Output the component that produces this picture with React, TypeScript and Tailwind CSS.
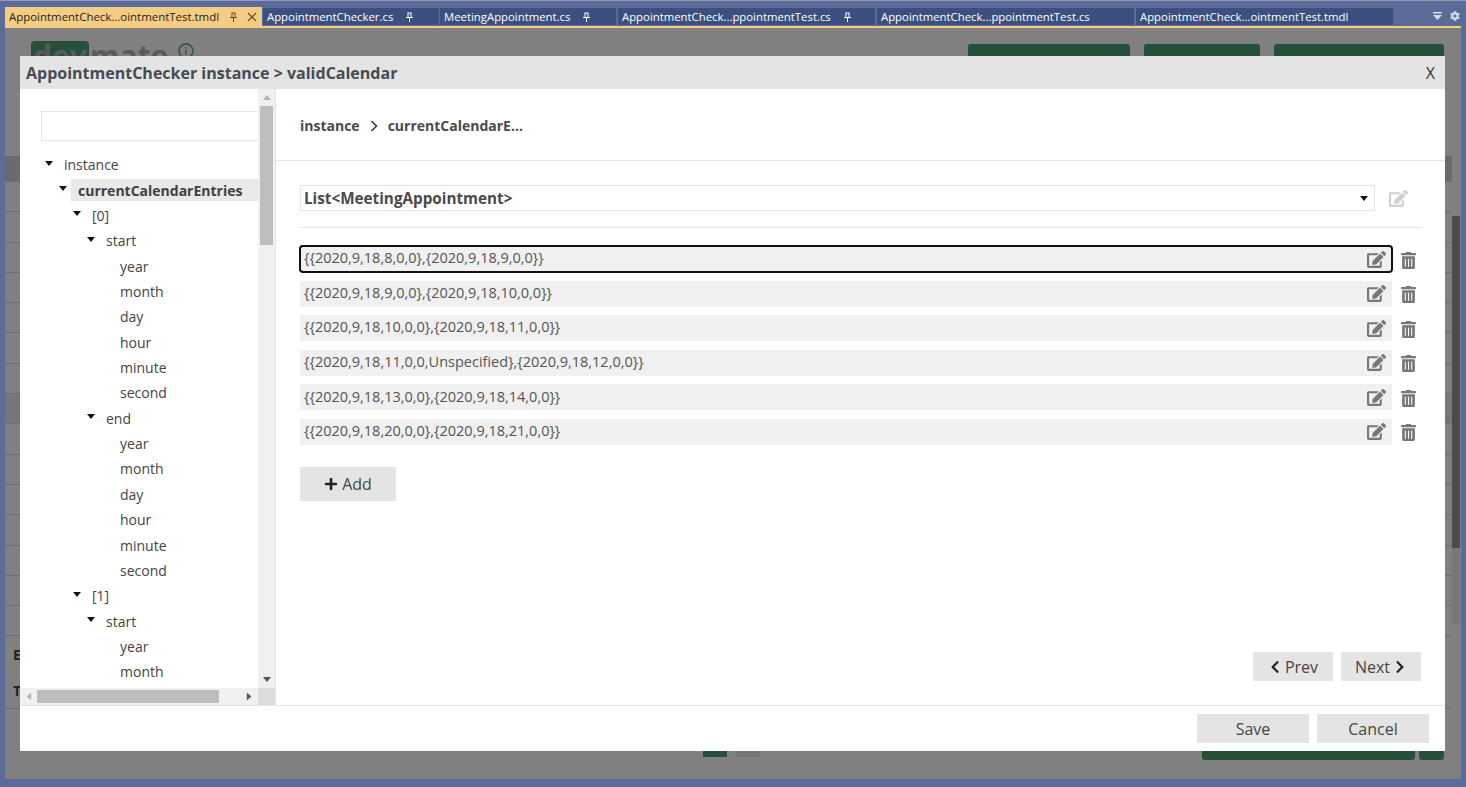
import { FaChevronLeft, FaChevronRight, FaCog, FaEdit, FaPlus, FaTrashAlt } from "react-icons/fa";

const tabs = [
  { name: "AppointmentChecker.cs", width: "w-[176px]", pin: true },
  { name: "MeetingAppointment.cs", width: "w-[176px]", pin: true },
  { name: "AppointmentCheck...ppointmentTest.cs", width: "w-[257px]", pin: true },
  { name: "AppointmentCheck...ppointmentTest.cs", width: "w-[257px]", pin: false },
  { name: "AppointmentCheck...ointmentTest.tmdl", width: "w-[257px]", pin: false },
];

const leaves = ["year", "month", "day", "hour", "minute", "second"];

const entries = [
  "{{2020,9,18,8,0,0},{2020,9,18,9,0,0}}",
  "{{2020,9,18,9,0,0},{2020,9,18,10,0,0}}",
  "{{2020,9,18,10,0,0},{2020,9,18,11,0,0}}",
  "{{2020,9,18,11,0,0,Unspecified},{2020,9,18,12,0,0}}",
  "{{2020,9,18,13,0,0},{2020,9,18,14,0,0}}",
  "{{2020,9,18,20,0,0},{2020,9,18,21,0,0}}",
];

function Pin({ className }: { className: string }) {
  return (
    <svg width="9" height="10" viewBox="0 0 9 10" className={className} fill="none" stroke="currentColor">
      <path d="M2.5 1h4M3 1v4.5M6 1v4.5M1 5.5h7M4.5 5.5V10" />
    </svg>
  );
}

function Caret({ size = 8, className = "text-black" }: { size?: number; className?: string }) {
  return (
    <svg width={size} height={size / 2 + 1} viewBox="0 0 10 6" className={`shrink-0 ${className}`} fill="currentColor">
      <path d="M0 0h10L5 6z" />
    </svg>
  );
}

function TreeRow({
  level,
  label,
  open,
  selected,
}: {
  level: number;
  label: string;
  open?: boolean;
  selected?: boolean;
}) {
  const indent = ["pl-[25px]", "pl-[39px]", "pl-[53px]", "pl-[67px]", "pl-[100px]"][level];
  return (
    <div className={`flex h-[25.36px] shrink-0 items-center ${indent}`}>
      {open && <Caret className={`mb-[3px] text-[#111] ${selected ? "mr-[4px]" : "mr-[11px]"}`} />}
      <span
        className={
          selected
            ? "flex h-[22px] w-[187px] shrink-0 items-center bg-[#e9e9e9] pl-[7px] font-bold text-[#3f3f3f]"
            : "text-[#444]"
        }
      >
        {label}
      </span>
    </div>
  );
}

function CalendarNode({ index, full }: { index: number; full: boolean }) {
  return (
    <>
      <TreeRow level={2} label={`[${index}]`} open />
      <TreeRow level={3} label="start" open />
      {(full ? leaves : leaves.slice(0, 2)).map((l) => (
        <TreeRow key={`s-${l}`} level={4} label={l} />
      ))}
      {full && (
        <>
          <TreeRow level={3} label="end" open />
          {leaves.map((l) => (
            <TreeRow key={`e-${l}`} level={4} label={l} />
          ))}
        </>
      )}
    </>
  );
}

function Backdrop() {
  return (
    <div className="flex flex-1 overflow-hidden bg-[#808080]">
      <div className="flex w-[1447px] shrink-0 flex-col">
        <div className="flex h-[128px] shrink-0 items-start overflow-hidden pl-[26px] pt-[13px]">
          <div className="flex h-[30px] items-center text-[30px] font-bold leading-none text-[#5a5a5a]">
            <span className="w-[58px] rounded-t-[4px] bg-[#26503c] px-[2px]">dev</span>
            <span className="w-[80px] pl-[1px]">mate</span>
          </div>
          <svg width="18" height="18" viewBox="0 0 18 18" className="ml-[8px] mt-[1px] text-[#26503c]" fill="none" stroke="currentColor" strokeWidth="1.3">
            <circle cx="9" cy="9" r="7" />
            <path d="M9 8v5M9 5v1.5" />
          </svg>
          <div className="ml-auto mr-[8px] mt-[3px] flex gap-[14px]">
            <div className="h-[30px] w-[162px] rounded-[3px] bg-[#26503c]" />
            <div className="h-[30px] w-[116px] rounded-[3px] bg-[#26503c]" />
            <div className="h-[30px] w-[170px] rounded-[3px] bg-[#26503c]" />
          </div>
        </div>
        <div className="h-[26px] shrink-0 bg-[#6b6b6b]" />
        {Array.from({ length: 15 }).map((_, i) => (
          <div
            key={i}
            className={`h-[30.3px] shrink-0 border-b border-[#6f6f6f] ${i === 7 ? "bg-[#777]" : ""}`}
          />
        ))}
        <div className="flex h-[36px] shrink-0 items-center pl-[8px] text-[14px] font-bold text-[#222]">E</div>
        <div className="flex h-[37px] shrink-0 items-center border-b border-[#6f6f6f] pl-[8px] text-[14px] font-bold text-[#222]">T</div>
        <div className="mt-[32px] flex h-[20px] shrink-0 items-start">
          <div className="ml-[698px] h-[16px] w-[24px] bg-[#26503c]" />
          <div className="ml-[9px] h-[16px] w-[24px] bg-[#777]" />
          <div className="ml-[442px] h-[19px] w-[213px] rounded-b-[3px] bg-[#26503c]" />
          <div className="ml-[4px] h-[19px] w-[25px] rounded-b-[3px] bg-[#26503c]" />
        </div>
      </div>
      <div className="flex w-[8px] shrink-0 flex-col">
        <div className="h-[188px] bg-[#808080]" />
        <div className="h-[332px] bg-[#4b4b4b]" />
        <div className="h-[77px] bg-[#787878]" />
      </div>
    </div>
  );
}

export default function App() {
  return (
    <div className="relative flex h-[787px] w-[1466px] flex-col overflow-hidden bg-[#5d6b99] font-['Open_Sans',sans-serif] text-[14px]">
      <div className="h-px shrink-0 bg-[#8e9bc2]" />
      <div className="mt-[6px] flex h-[19px] shrink-0 items-start gap-px pl-[5px]">
        <div className="flex h-[19px] w-[257px] items-center bg-[#f5cc84] pl-[4px] text-[11.45px] text-[#1e1e1e]">
          <span>AppointmentCheck...ointmentTest.tmdl</span>
          <Pin className="ml-[10px] text-[#5b4a2a]" />
          <svg width="10" height="10" viewBox="0 0 10 10" className="ml-[9px] text-[#6b5630]" stroke="currentColor" strokeWidth="1.3">
            <path d="M1 1l8 8M9 1l-8 8" />
          </svg>
        </div>
        {tabs.map((t, i) => (
          <div
            key={i}
            className={`mt-px flex h-[17px] ${t.width} shrink-0 items-center bg-[#3b4f81] pl-[4px] text-[11.35px] text-white ${i < 2 ? "" : "ml-px"}`}
          >
            <span>{t.name}</span>
            {t.pin && <Pin className="ml-[12px] text-white" />}
          </div>
        ))}
        <div className="ml-auto mr-[6px] mt-[4px] flex items-center gap-[8px] text-[#d5dbea]">
          <svg width="9" height="8" viewBox="0 0 9 8" fill="currentColor">
            <path d="M0 0h9v1.5H0zM0 3h9L4.5 8z" />
          </svg>
          <FaCog size={10} />
        </div>
      </div>
      <div className="mx-[5px] h-[2px] shrink-0 bg-[#f5cc84]" />
      <div className="mx-[5px] flex h-[751px] shrink-0">
        <Backdrop />
      </div>

      <div className="absolute left-[20px] top-[56px] flex h-[695px] w-[1425px] flex-col bg-white">
        <div className="flex h-[33px] shrink-0 items-center justify-between bg-[#e4e4e4] pl-[6px] pr-[10px]">
          <span className="text-[16px] font-bold text-[#454b52]">AppointmentChecker instance &gt; validCalendar</span>
          <span className="text-[16px] text-[#333]">X</span>
        </div>

        <div className="flex min-h-0 flex-1">
          <div className="flex w-[256px] shrink-0 flex-col border-r border-[#e4e4e4]">
            <div className="flex min-h-0 flex-1">
              <div className="flex min-w-0 flex-1 flex-col overflow-hidden pt-[22px]">
                <div className="ml-[21px] h-[30px] shrink-0 border border-r-0 border-[#e4e4e4]" />
                <div className="mt-[11px] flex flex-col">
                  <TreeRow level={0} label="instance" open />
                  <TreeRow level={1} label="currentCalendarEntries" open selected />
                  <CalendarNode index={0} full />
                  <CalendarNode index={1} full={false} />
                </div>
              </div>
              <div className="flex w-[17px] shrink-0 flex-col items-center bg-[#f0f0f0]">
                <div className="flex h-[17px] shrink-0 items-center justify-center">
                  <Caret size={8} className="rotate-180 text-[#b5b5b5]" />
                </div>
                <div className="h-[139px] w-[13px] shrink-0 bg-[#bdbdbd]" />
                <div className="mt-auto flex h-[17px] shrink-0 items-center justify-center">
                  <Caret size={8} className="text-[#555]" />
                </div>
              </div>
            </div>
            <div className="flex h-[17px] shrink-0 bg-[#f0f0f0]">
              <div className="flex h-full w-[17px] shrink-0 items-center justify-center">
                <Caret size={8} className="rotate-90 text-[#b5b5b5]" />
              </div>
              <div className="my-[2px] w-[182px] shrink-0 bg-[#bdbdbd]" />
              <div className="ml-[21px] flex h-full w-[17px] shrink-0 items-center justify-center">
                <Caret size={8} className="-rotate-90 text-[#555]" />
              </div>
              <div className="ml-auto h-full w-[17px] bg-[#dcdcdc]" />
            </div>
          </div>

          <div className="flex min-w-0 flex-1 flex-col">
            <div className="flex h-[72px] shrink-0 items-center border-b border-[#e4e4e4] pl-[24px] pt-[2px] font-bold text-[#4a4a4a]">
              <span>instance</span>
              <svg width="8" height="12" viewBox="0 0 8 12" className="ml-[10px] mr-[10px] text-[#333]" fill="none" stroke="currentColor" strokeWidth="1.5">
                <path d="M1.5 1l5 5-5 5" />
              </svg>
              <span>currentCalendarE...</span>
            </div>

            <div className="flex min-h-0 flex-1 flex-col pb-[24px] pl-[24px] pr-[24px]">
              <div className="mt-[24px] flex shrink-0 items-center">
                <div className="flex h-[26px] w-[1075px] shrink-0 items-center justify-between border border-[#e4e4e4] pl-[3px] pr-[6px] text-[15.25px] font-bold text-[#4a4a4a]">
                  <span>List&lt;MeetingAppointment&gt;</span>
                  <Caret size={8} className="text-[#111]" />
                </div>
                <FaEdit size={19} className="ml-[14px] text-[#d0d0d0]" />
              </div>
              <div className="mt-[16px] h-px shrink-0 bg-[#e4e4e4]" />
              <div className="mt-[18px] flex shrink-0 flex-col gap-[8.6px]">
                {entries.map((e, i) => (
                  <div key={i} className="flex items-center">
                    <div
                      className={`flex h-[26px] w-[1092px] shrink-0 items-center justify-between bg-[#f0f0f0] pl-[4px] pr-[6px] text-[14.5px] text-[#555] ${
                        i === 0 ? "rounded-[3px] outline-2 -outline-offset-1 outline-[#111]" : ""
                      }`}
                    >
                      <span className="mb-[2px]">{e}</span>
                      <FaEdit size={19} className="text-[#777]" />
                    </div>
                    <FaTrashAlt size={17} className="ml-[8px] mt-[2px] text-[#777]" />
                  </div>
                ))}
              </div>
              <button className="mt-[22px] flex h-[34px] w-[96px] shrink-0 items-center justify-center gap-[4px] bg-[#e4e4e4] text-[16px] text-[#444]">
                <FaPlus size={14} className="text-[#222]" />
                Add
              </button>
              <div className="mt-auto flex shrink-0 justify-end gap-[8px]">
                <button className="flex h-[29px] w-[80px] items-center justify-center gap-[3px] bg-[#e4e4e4] text-[16px] text-[#444]">
                  <FaChevronLeft size={14} className="text-[#222]" />
                  Prev
                </button>
                <button className="flex h-[29px] w-[80px] items-center justify-center gap-[3px] bg-[#e4e4e4] text-[16px] text-[#444]">
                  Next
                  <FaChevronRight size={14} className="text-[#222]" />
                </button>
              </div>
            </div>
          </div>
        </div>

        <div className="flex h-[46px] shrink-0 items-center justify-end gap-[8px] border-t border-[#e4e4e4] pr-[16px]">
          <button className="h-[29px] w-[112px] bg-[#e4e4e4] text-[16px] text-[#444]">Save</button>
          <button className="h-[29px] w-[112px] bg-[#e4e4e4] text-[16px] text-[#444]">Cancel</button>
        </div>
      </div>
    </div>
  );
}
